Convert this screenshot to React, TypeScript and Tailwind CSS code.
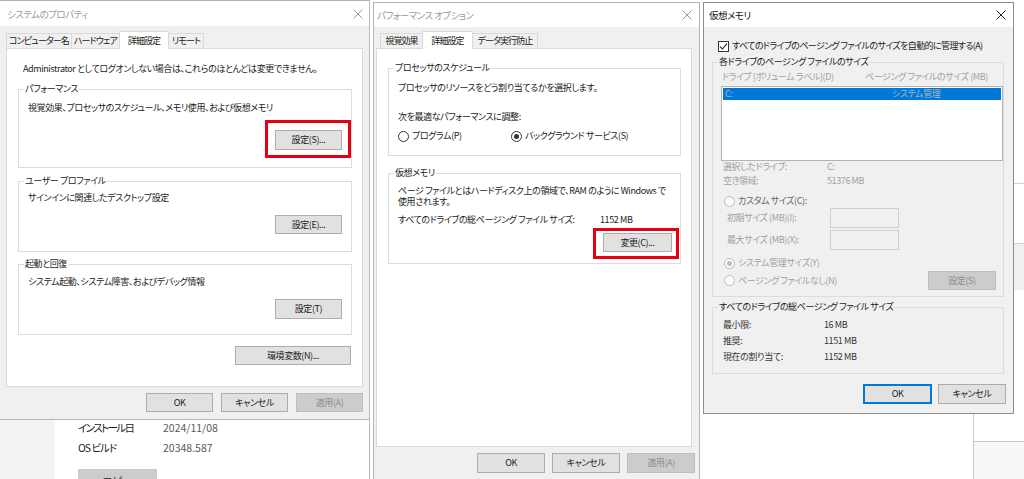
import React from 'react';

const font = "font-['Noto_Sans_CJK_JP','Noto_Sans',sans-serif] [font-feature-settings:'palt']";

function CloseX({ className }: { className: string }) {
  return (
    <svg width="10" height="10" viewBox="0 0 10 10" className={className}>
      <path d="M0.5 0.5L9.5 9.5M9.5 0.5L0.5 9.5" stroke="currentColor" strokeWidth="1" fill="none" />
    </svg>
  );
}

function TitleBar({ title, active = false, className }: { title: string; active?: boolean; className: string }) {
  return (
    <div className={`flex shrink-0 items-center justify-between bg-white ${className}`}>
      <span className={`text-[9.5px] leading-[12px] tracking-[-0.5px] ${active ? 'text-[#111]' : 'text-[#9a9a9a]'}`}>{title}</span>
      <CloseX className={active ? 'text-[#222]' : 'text-[#9a9a9a]'} />
    </div>
  );
}

function Tab({ children, w, selected = false }: { children: React.ReactNode; w: string; selected?: boolean }) {
  return (
    <div
      className={`-ml-px flex items-center justify-center overflow-hidden border border-b-0 border-[#d9d9d9] leading-[12px] tracking-[-0.9px] ${w} ${
        selected ? 'relative z-10 h-[18px] bg-white' : 'mb-px h-[15px] bg-[#f0f0f0]'
      }`}
    >
      {children}
    </div>
  );
}

function Btn({
  children,
  className = '',
  disabled = false,
  focused = false,
}: {
  children: React.ReactNode;
  className?: string;
  disabled?: boolean;
  focused?: boolean;
}) {
  const tone = disabled
    ? 'border border-[#bfbfbf] bg-[#cccccc] text-[#8d8d8d]'
    : focused
    ? 'border-2 border-[#0078d7] bg-[#e1e1e1] text-[#1a1a1a]'
    : 'border border-[#adadad] bg-[#e1e1e1] text-[#1a1a1a]';
  return <div className={`flex shrink-0 items-center justify-center leading-[12px] ${tone} ${className}`}>{children}</div>;
}

function Group({
  label,
  className,
  labelClass,
  children,
}: {
  label: string;
  className: string;
  labelClass: string;
  children: React.ReactNode;
}) {
  return (
    <div className={`relative shrink-0 border border-[#dcdcdc] ${className}`}>
      <span className={`absolute -top-[7px] left-[5px] px-[1px] leading-[12px] ${labelClass}`}>{label}</span>
      {children}
    </div>
  );
}

function Radio({ checked = false, disabled = false }: { checked?: boolean; disabled?: boolean }) {
  return (
    <span
      className={`flex h-[11px] w-[11px] shrink-0 items-center justify-center rounded-full border ${
        disabled ? 'border-[#bcbcbc] bg-[#fbfbfb]' : 'border-[#333] bg-white'
      }`}
    >
      {checked && <span className={`h-[5px] w-[5px] rounded-full ${disabled ? 'bg-[#bcbcbc]' : 'bg-[#333]'}`} />}
    </span>
  );
}

function RedMark({ className }: { className: string }) {
  return <span className={`pointer-events-none absolute border-[3px] border-[#e60012] ${className}`} />;
}

function SystemProperties() {
  return (
    <div className="flex h-[479px] w-[370px] shrink-0 flex-col border-r border-[#b9b9b9]">
      <div className="flex h-[420px] shrink-0 flex-col border-y border-[#b4b4b4] bg-[#f0f0f0]">
        <TitleBar title="システムのプロパティ" className="h-[25px] pl-[7px] pr-[6px]" />
        <div className="relative z-10 ml-[7px] mt-[5px] flex h-[18px] items-end">
          <Tab w="w-[66px]">コンピューター名</Tab>
          <Tab w="w-[49px]">ハードウェア</Tab>
          <Tab w="w-[50px]" selected>
            詳細設定
          </Tab>
          <Tab w="w-[36px]">リモート</Tab>
        </div>
        <div className="-mt-px ml-[6px] h-[339px] w-[357px] shrink-0 border border-[#d9d9d9] bg-white">
          <p className="ml-[16px] mt-[14px] leading-[12px]">
            Administrator としてログオンしない場合は、これらのほとんどは変更できません。
          </p>
          <Group label="パフォーマンス" labelClass="bg-white" className="ml-[11px] mt-[14px] h-[79px] w-[334px]">
            <p className="ml-[9px] mt-[12px] leading-[12px]">視覚効果、プロセッサのスケジュール、メモリ使用、および仮想メモリ</p>
            <div className="mt-[16px] flex justify-end pr-[9px]">
              <div className="relative">
                <Btn className="h-[20px] w-[67px]">設定(S)...</Btn>
                <RedMark className="-bottom-[8px] -left-[10px] -right-[9px] -top-[10px]" />
              </div>
            </div>
          </Group>
          <Group label="ユーザー プロファイル" labelClass="bg-white" className="ml-[11px] mt-[13px] h-[71px] w-[334px]">
            <p className="ml-[9px] mt-[10px] leading-[12px]">サインインに関連したデスクトップ設定</p>
            <div className="mt-[11px] flex justify-end pr-[9px]">
              <Btn className="h-[19px] w-[67px]">設定(E)...</Btn>
            </div>
          </Group>
          <Group label="起動と回復" labelClass="bg-white" className="ml-[11px] mt-[12px] h-[71px] w-[334px]">
            <p className="ml-[9px] mt-[11px] leading-[12px]">システム起動、システム障害、およびデバッグ情報</p>
            <div className="mt-[11px] flex justify-end pr-[9px]">
              <Btn className="h-[20px] w-[67px]">設定(T)</Btn>
            </div>
          </Group>
          <div className="mt-[11px] flex justify-end pr-[11px]">
            <Btn className="h-[19px] w-[116px]">環境変数(N)...</Btn>
          </div>
        </div>
        <div className="mt-[6px] flex justify-end gap-[8px] pr-[6px]">
          <Btn className="h-[19px] w-[67px]">OK</Btn>
          <Btn className="h-[19px] w-[67px]">キャンセル</Btn>
          <Btn disabled className="h-[19px] w-[67px]">
            適用(A)
          </Btn>
        </div>
      </div>
      <div className="flex flex-1 overflow-hidden">
        <div className="w-[55px] shrink-0 bg-[#f3f3f3]" />
        <div className="pl-[23px] text-[10.5px] tracking-normal text-[#1a1a1a]">
          <div className="mt-[1px] flex h-[14px] items-center">
            <span className="w-[85px] tracking-[-1.6px]">インストール日</span>
            <span className="text-[#5a5a5a]">2024/11/08</span>
          </div>
          <div className="mt-[6px] flex h-[14px] items-center">
            <span className="w-[85px] tracking-[-1px]">OS ビルド</span>
            <span className="text-[#5a5a5a]">20348.587</span>
          </div>
          <div className="mt-[14px] flex h-[24px] w-[79px] items-center justify-center bg-[#cccccc]">コピー</div>
        </div>
      </div>
    </div>
  );
}

function PerformanceOptions() {
  return (
    <div className="ml-[3px] mt-[2px] flex h-[477px] w-[327px] shrink-0 flex-col border-x border-t border-[#b4b4b4] bg-[#f0f0f0]">
      <TitleBar title="パフォーマンス オプション" className="h-[24px] pl-[3px] pr-[7px]" />
      <div className="relative z-10 ml-[7px] mt-[4px] flex h-[18px] items-end">
        <Tab w="w-[43px]">視覚効果</Tab>
        <Tab w="w-[51px]" selected>
          詳細設定
        </Tab>
        <Tab w="w-[66px]">データ実行防止</Tab>
      </div>
      <div className="-mt-px ml-[2px] h-[399px] w-[316px] shrink-0 border border-[#d9d9d9] bg-white">
        <Group label="プロセッサのスケジュール" labelClass="bg-white" className="ml-[11px] mt-[19px] h-[88px] w-[293px]">
          <p className="ml-[9px] mt-[13px] leading-[12px]">プロセッサのリソースをどう割り当てるかを選択します。</p>
          <p className="ml-[9px] mt-[17px] leading-[12px]">次を最適なパフォーマンスに調整:</p>
          <div className="ml-[9px] mt-[7px] flex h-[12px] items-center">
            <div className="flex w-[113px] items-center gap-[3px]">
              <Radio />
              <span className="leading-[12px]">プログラム(P)</span>
            </div>
            <div className="flex items-center gap-[3px]">
              <Radio checked />
              <span className="leading-[12px]">バックグラウンド サービス(S)</span>
            </div>
          </div>
        </Group>
        <Group label="仮想メモリ" labelClass="bg-white" className="ml-[11px] mt-[17px] h-[91px] w-[293px]">
          <p className="ml-[9px] mt-[11px] leading-[11px]">
            ページ ファイルとはハードディスク上の領域で、RAM のように Windows で
            <br />
            使用されます。
          </p>
          <div className="ml-[9px] mt-[7px] flex leading-[12px]">
            <span className="w-[202px]">すべてのドライブの総ページング ファイル サイズ:</span>
            <span>1152 MB</span>
          </div>
          <div className="mt-[7px] flex justify-end pr-[8px]">
            <div className="relative">
              <Btn className="h-[19px] w-[69px]">変更(C)...</Btn>
              <RedMark className="-bottom-[7px] -left-[10px] -right-[7px] -top-[5px]" />
            </div>
          </div>
        </Group>
      </div>
      <div className="mt-[6px] flex justify-end gap-[7px] pr-[4px]">
        <Btn className="h-[20px] w-[68px]">OK</Btn>
        <Btn className="h-[20px] w-[68px]">キャンセル</Btn>
        <Btn disabled className="h-[20px] w-[68px]">
          適用(A)
        </Btn>
      </div>
    </div>
  );
}

function VirtualMemory() {
  const dim = 'text-[#a0a0a0]';
  return (
    <div className="ml-[3px] flex w-[321px] shrink-0 flex-col">
      <div className="flex h-[414px] shrink-0">
        <div className="mt-[2px] flex h-[412px] w-[311px] shrink-0 flex-col border border-[#8c8c8c] bg-[#f0f0f0]">
          <TitleBar title="仮想メモリ" active className="h-[24px] pl-[5px] pr-[7px]" />
          <div className="mt-[13px] flex h-[12px] items-center gap-[3px] pl-[14px]">
            <span className="flex h-[11px] w-[11px] items-center justify-center border border-[#333] bg-white">
              <svg width="9" height="9" viewBox="0 0 9 9">
                <path d="M1 4.6L3.4 7L8 1.6" stroke="#222" strokeWidth="1.1" fill="none" />
              </svg>
            </span>
            <span className="leading-[12px] tracking-[-0.6px]">すべてのドライブのページング ファイルのサイズを自動的に管理する(A)</span>
          </div>
          <Group
            label="各ドライブのページング ファイルのサイズ"
            labelClass="bg-[#f0f0f0] text-[#1a1a1a]"
            className="ml-[8px] mt-[10px] h-[235px] w-[292px]"
          >
            <div className={`ml-[9px] mt-[8px] flex leading-[12px] ${dim}`}>
              <span className="w-[143px]">ドライブ [ボリューム ラベル](D)</span>
              <span>ページング ファイルのサイズ (MB)</span>
            </div>
            <div className="ml-[8px] mt-[3px] h-[75px] w-[282px] border border-[#b4b4b4] bg-white">
              <div className="ml-px mt-px flex h-[12px] w-[278px] items-center bg-[#0078d7] leading-[12px] text-[#a9b7c6]">
                <span className="w-[169px] pl-[2px]">C:</span>
                <span>システム管理</span>
              </div>
            </div>
            <div className={`-mt-px ml-[10px] leading-[14px] ${dim}`}>
              <div className="flex">
                <span className="w-[104px]">選択したドライブ:</span>
                <span>C:</span>
              </div>
              <div className="flex">
                <span className="w-[104px]">空き領域:</span>
                <span>51376 MB</span>
              </div>
            </div>
            <div className="ml-[11px] mt-[7px] flex h-[12px] items-center gap-[3px]">
              <Radio disabled />
              <span className="leading-[12px] text-[#666]">カスタム サイズ(C):</span>
            </div>
            <div className={`ml-[14px] mt-[1px] flex h-[20px] items-center ${dim}`}>
              <span className="w-[103px]">初期サイズ (MB)(I):</span>
              <span className="h-[20px] w-[69px] border border-[#cfcfcf] bg-[#f0f0f0]" />
            </div>
            <div className={`ml-[14px] mt-[2px] flex h-[20px] items-center ${dim}`}>
              <span className="w-[103px]">最大サイズ (MB)(X):</span>
              <span className="h-[20px] w-[69px] border border-[#cfcfcf] bg-[#f0f0f0]" />
            </div>
            <div className={`ml-[11px] mt-[7px] flex h-[12px] items-center gap-[3px] ${dim}`}>
              <Radio checked disabled />
              <span className="leading-[12px]">システム管理サイズ(Y)</span>
            </div>
            <div className={`ml-[11px] mt-[2px] flex h-[19px] items-center justify-between pr-[7px] ${dim}`}>
              <div className="flex items-center gap-[3px]">
                <Radio disabled />
                <span className="leading-[12px]">ページング ファイルなし(N)</span>
              </div>
              <Btn disabled className="h-[19px] w-[68px]">
                設定(S)
              </Btn>
            </div>
          </Group>
          <Group
            label="すべてのドライブの総ページング ファイル サイズ"
            labelClass="bg-[#f0f0f0] text-[#1a1a1a]"
            className="ml-[8px] mt-[10px] h-[67px] w-[292px]"
          >
            <div className="ml-[10px] mt-[9px] leading-[16px] text-[#333]">
              <div className="flex">
                <span className="w-[101px]">最小限:</span>
                <span>16 MB</span>
              </div>
              <div className="flex">
                <span className="w-[101px]">推奨:</span>
                <span>1151 MB</span>
              </div>
              <div className="flex">
                <span className="w-[101px]">現在の割り当て:</span>
                <span>1152 MB</span>
              </div>
            </div>
          </Group>
          <div className="mt-[10px] flex justify-end gap-[6px] pr-[7px]">
            <Btn focused className="h-[20px] w-[69px]">
              OK
            </Btn>
            <Btn className="h-[20px] w-[68px]">キャンセル</Btn>
          </div>
        </div>
        <div className="flex flex-1 flex-col">
          <div className="h-[184px] border-b border-[#d0d0d0]" />
          <div className="h-[60px] border-b border-[#d0d0d0]" />
          <div className="h-[46px] bg-[#f0f0f0]" />
        </div>
      </div>
      <div className="flex flex-1">
        <div className="w-[270px] shrink-0" />
        <div className="flex flex-1 flex-col border-l border-[#c8c8c8]">
          <div className="h-[28px] border-b border-[#c8c8c8]" />
          <div className="flex-1 bg-[#f8f8f8]" />
        </div>
      </div>
    </div>
  );
}

export default function App() {
  return (
    <div
      className={`flex h-[479px] w-[1024px] overflow-hidden whitespace-nowrap bg-white text-[9px] tracking-[-0.4px] text-[#1a1a1a] ${font}`}
    >
      <SystemProperties />
      <PerformanceOptions />
      <VirtualMemory />
    </div>
  );
}
